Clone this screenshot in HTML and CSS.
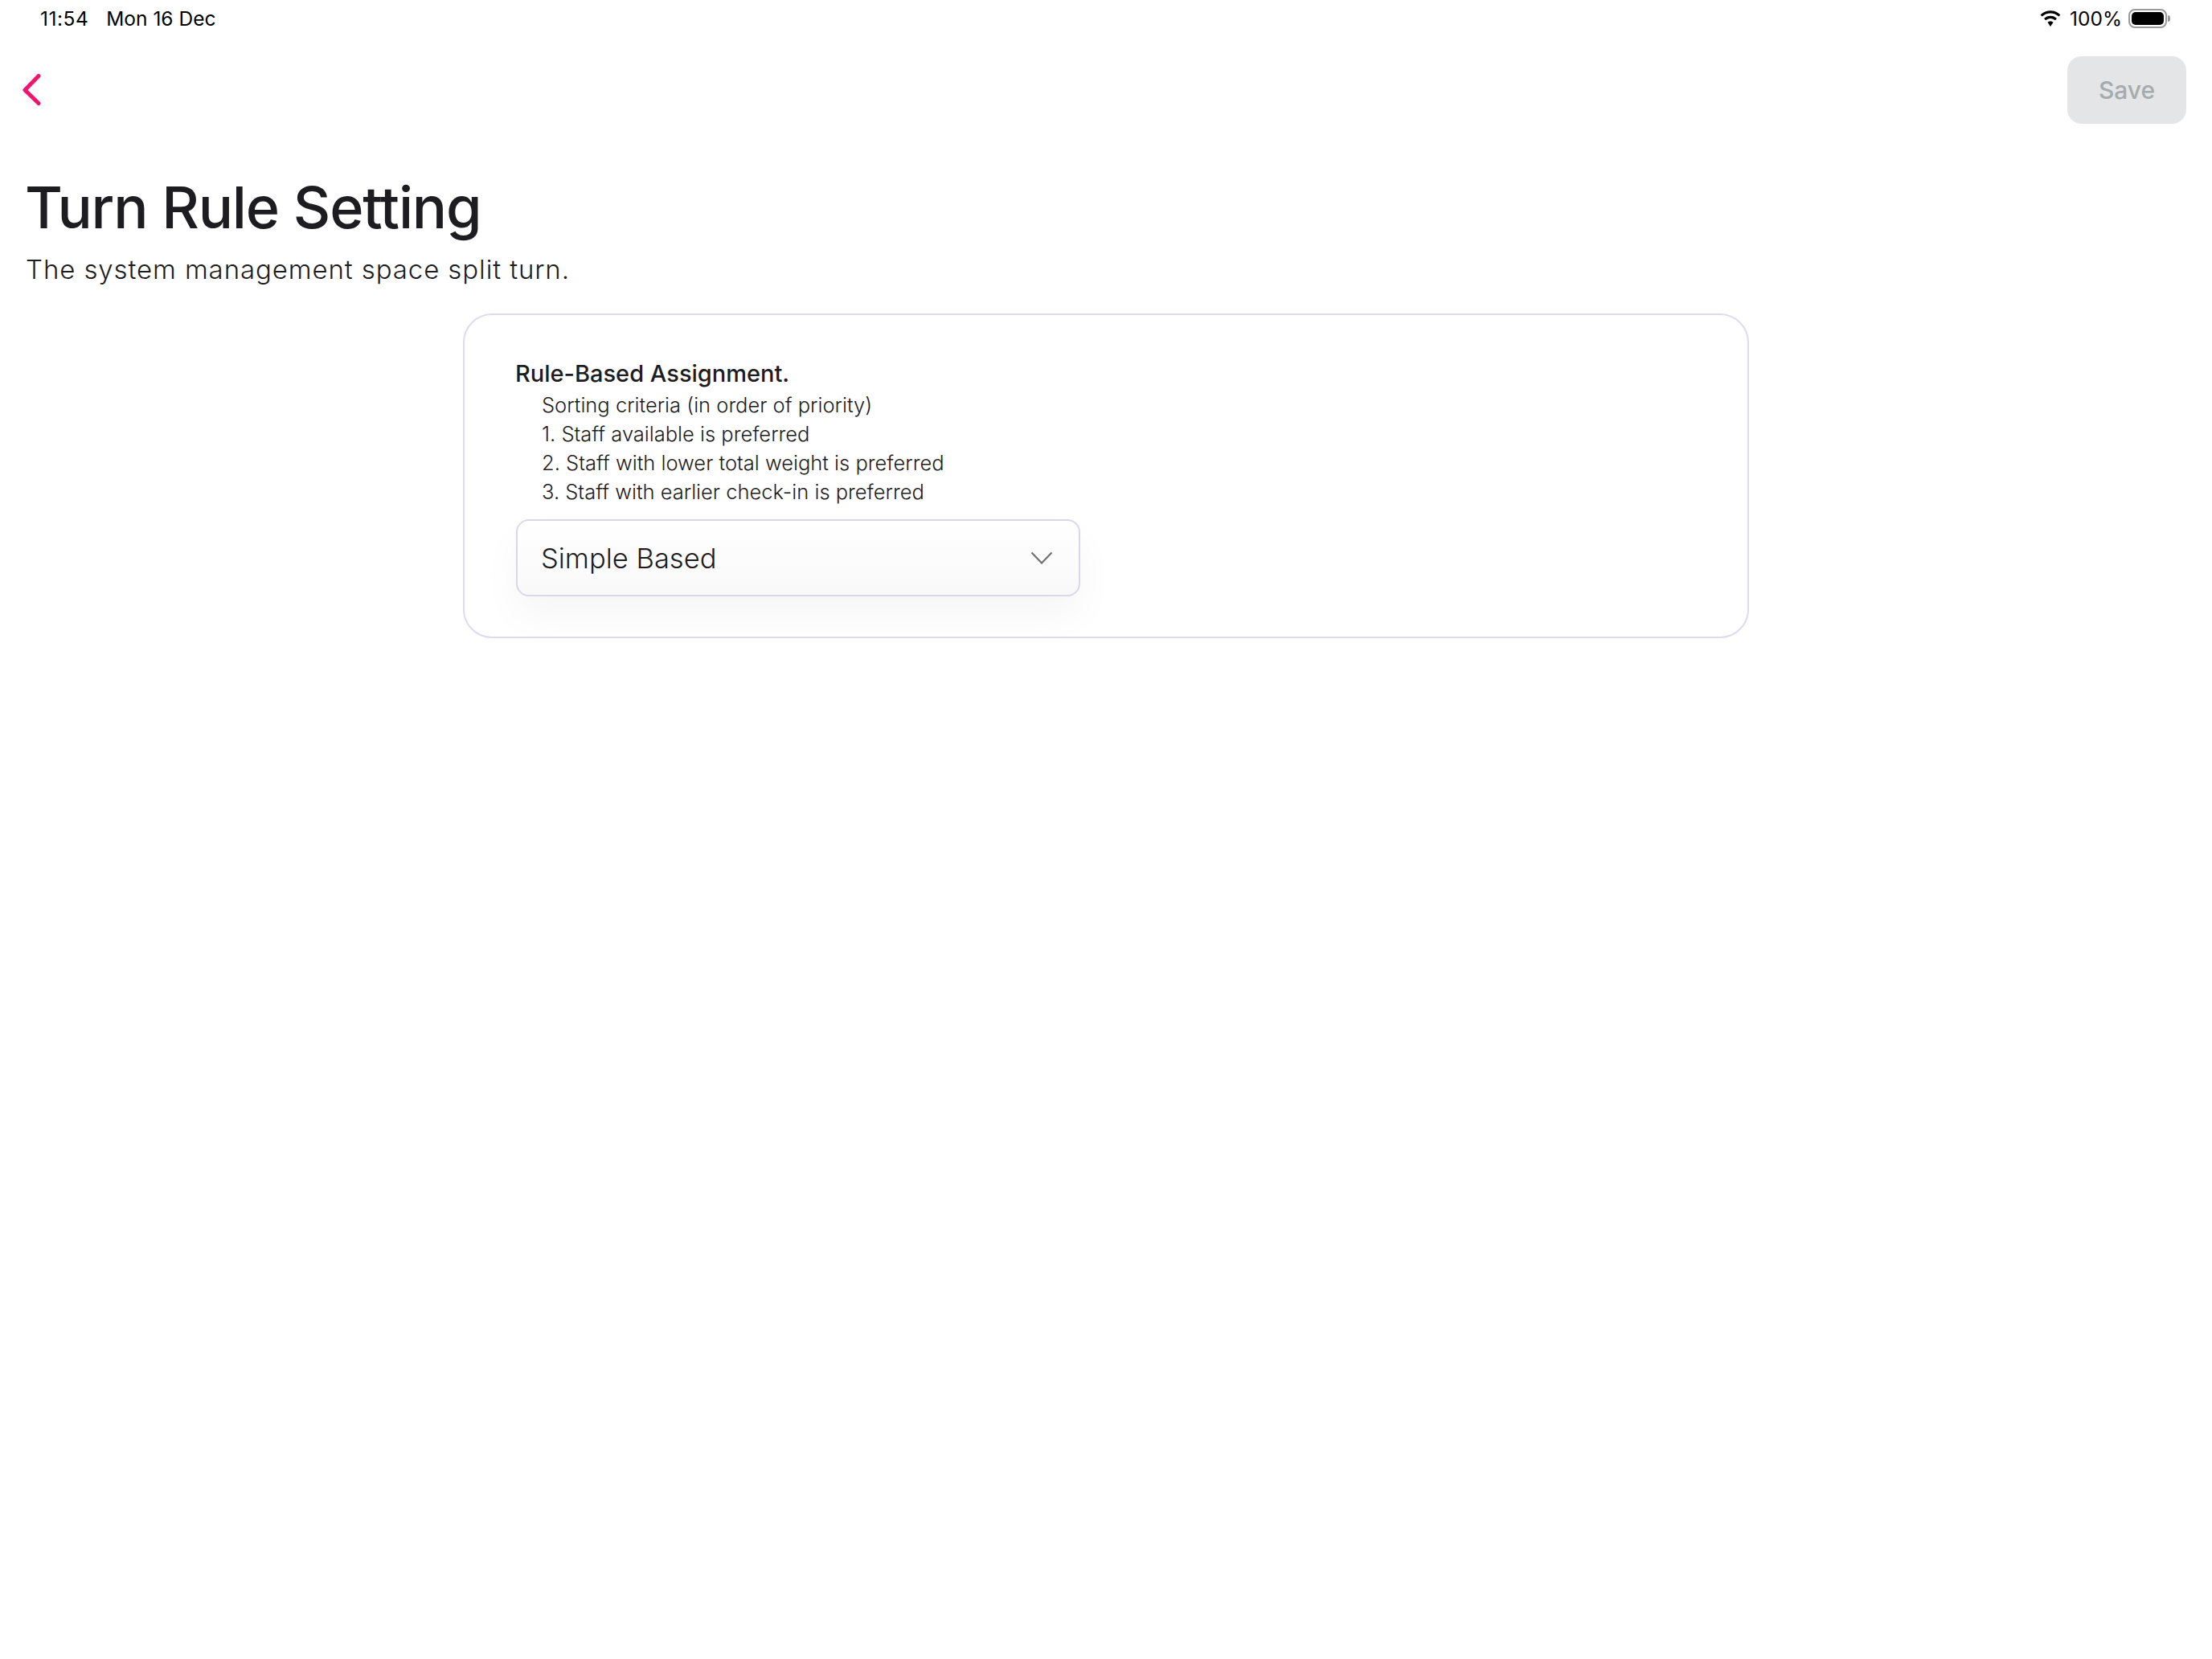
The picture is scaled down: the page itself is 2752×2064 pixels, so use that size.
FILE: index.html
```html
<!DOCTYPE html>
<html lang="en">
<head>
  <meta charset="UTF-8" />
  <title>Turn Rule Setting</title>
  <link rel="stylesheet" href="styles.css">
</head>
<body>
  <div class="status-bar">
    <div class="status-left">
      <span class="time">11:54</span>
      <span>Mon 16 Dec</span>
    </div>
    <div class="status-right">
      <svg class="wifi" viewBox="0 0 27 20" width="28" height="21">
        <path d="M13.5 3.2c3.9 0 7.4 1.5 10 4l2-2.1C22.300 2 18.100 0.200 13.500 0.200S4.700 2 1.500 5.100l2 2.100c2.600-2.500 6.100-4 10-4z" />
        <path d="M13.500 9.400c2.200 0 4.200 0.900 5.700 2.300l2-2.100c-2-1.900-4.700-3.100-7.700-3.100s-5.700 1.200-7.700 3.100l2 2.100c1.500-1.400 3.500-2.300 5.700-2.300z" />
        <path d="M13.500 12.800c-1.300 0-2.500 0.500-3.400 1.300l3.400 5.100 3.400-5.100c-0.900-0.800-2.100-1.300-3.400-1.300z" />
      </svg>
      <span>100%</span>
      <div class="battery">
        <div class="battery-body"><div class="battery-fill"></div></div>
        <div class="battery-nub"></div>
      </div>
    </div>
  </div>

  <div class="top-bar">
    <button class="back">
      <svg viewBox="0 0 24 40" width="24" height="40">
        <path d="M21 3.500L4 21l17 16.500" fill="none" stroke="#f0146f" stroke-width="5" stroke-linecap="round" stroke-linejoin="round" />
      </svg>
    </button>
    <button class="save" disabled>Save</button>
  </div>

  <div class="page-head">
    <h1>Turn Rule Setting</h1>
    <p>The system management space split turn.</p>
  </div>

  <div class="card">
    <h2>Rule-Based Assignment.</h2>
    <ul class="rules">
      <li>Sorting criteria (in order of priority)</li>
      <li>1. Staff available is preferred</li>
      <li>2. Staff with lower total weight is preferred</li>
      <li>3. Staff with earlier check-in is preferred</li>
    </ul>
    <div class="select">
      <span>Simple Based</span>
      <svg viewBox="0 0 28 16" width="28" height="16">
        <path d="M1.500 1.500L14 14.500 26.500 1.500" fill="none" stroke="#707070" stroke-width="2.200" />
      </svg>
    </div>
  </div>
</body>
</html>
```

FILE: styles.css
```css
body {
  margin: 0;
  background-color: #ffffff;
  font-family: "Inter", "Noto Sans", sans-serif;
  color: #1d1c20;
}

.status-bar {
  display: flex;
  justify-content: space-between;
  align-items: center;
  height: 46px;
  padding: 0 52px 0 50px;
  font-family: "Inter", sans-serif;
  font-size: 24.500px;
  color: #000000;
}

.status-left {
  display: flex;
  gap: 22px;
}

.time {
  letter-spacing: 0.5px;
}

.status-right {
  display: flex;
  align-items: center;
  gap: 8px;
}

.wifi {
  margin-right: 2px;
}

.battery {
  display: flex;
  align-items: center;
  gap: 1px;
}

.battery-body {
  width: 48px;
  height: 24px;
  box-sizing: border-box;
  border: 2px solid #9a9a9a;
  border-radius: 8px;
  padding: 2px;
}

.battery-fill {
  height: 100%;
  background-color: #000000;
  border-radius: 5px;
}

.battery-nub {
  width: 3px;
  height: 8px;
  background-color: #9a9a9a;
  border-radius: 0 3px 3px 0;
}

.top-bar {
  display: flex;
  justify-content: space-between;
  align-items: center;
  height: 84px;
  margin-top: 24px;
  padding: 0 32px 0 27px;
}

.back {
  display: flex;
  padding: 0;
  margin-top: -2px;
  border: none;
  background: none;
}

.save {
  width: 148px;
  height: 84px;
  padding-bottom: 2px;
  border: none;
  border-radius: 18px;
  background-color: #e3e5e7;
  color: #a5abad;
  font-family: inherit;
  font-size: 30px;
  font-weight: 500;
}

.page-head {
  padding: 0 32px;
  margin-top: 55px;
}

h1 {
  margin: 0 0 0 -1px;
  font-size: 72px;
  line-height: 98px;
  font-weight: 500;
  letter-spacing: -1.200px;
}

.page-head p {
  margin: 5px 0 0;
  font-size: 33px;
  line-height: 46px;
  font-weight: 300;
  letter-spacing: 0.9px;
}

.card {
  width: 1600px;
  box-sizing: border-box;
  margin: 32px 0 0 576px;
  padding: 52px 64px 50px;
  border: 2px solid #dcdcec;
  border-radius: 36px;
}

h2 {
  margin: 0 0 0 -1px;
  font-size: 29px;
  line-height: 42px;
  font-weight: 500;
}

.rules {
  list-style: none;
  margin: 0 0 16px;
  padding: 0 0 0 32px;
  font-size: 25.500px;
  line-height: 36px;
  font-weight: 300;
}

.select {
  display: flex;
  justify-content: space-between;
  align-items: center;
  width: 702px;
  height: 96px;
  box-sizing: border-box;
  padding: 0 32px 0 29px;
  border: 2px solid #d8d8e8;
  border-radius: 16px;
  background: linear-gradient(#ffffff, #f9f9fa);
  box-shadow: 0 24px 48px rgba(0, 0, 0, 0.04);
  font-size: 34.500px;
  font-weight: 300;
}
```
